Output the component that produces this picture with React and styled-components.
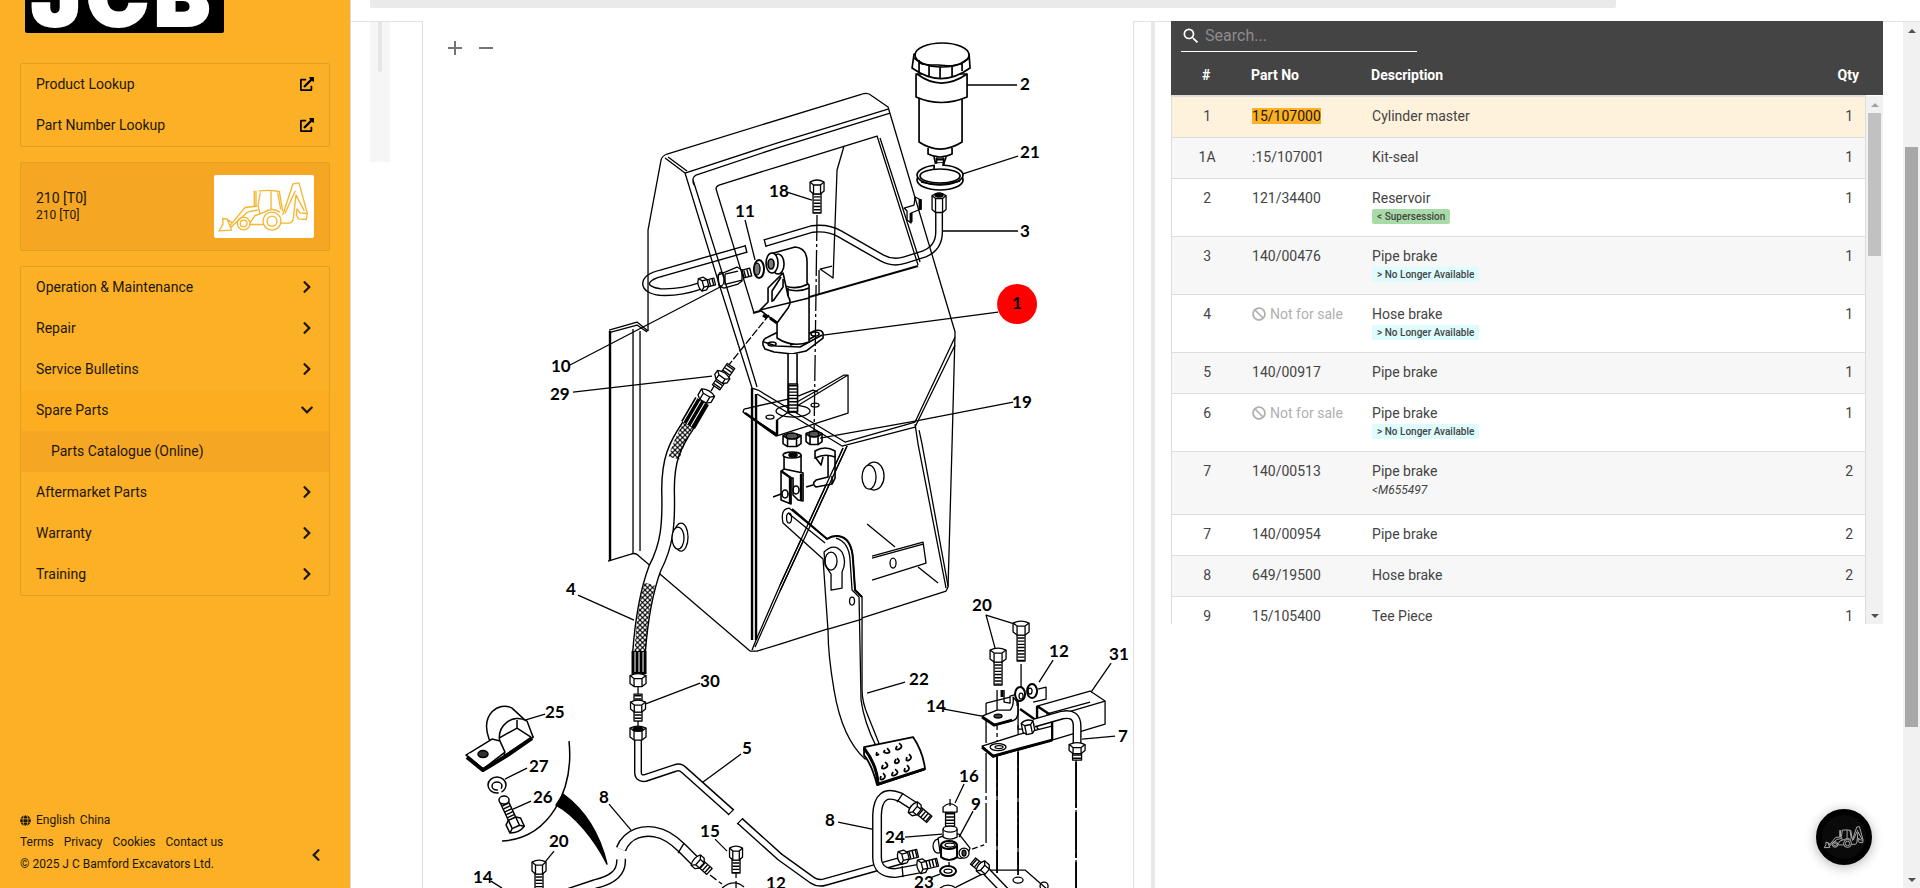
import styled, { createGlobalStyle } from "styled-components";
import {
  FaBan,
  FaChevronDown,
  FaChevronLeft,
  FaChevronRight,
  FaExternalLinkAlt,
  FaGlobe,
} from "react-icons/fa";
import { MdAdd, MdRemove, MdSearch } from "react-icons/md";

const GlobalStyle = createGlobalStyle`
  * {
    box-sizing: border-box;
  }

  body {
    margin: 0;
    font-family: Roboto, "Liberation Sans", sans-serif;
    font-size: 14px;
    color: #444;
    background-color: #fff;
    overflow: hidden;
  }

  button, input {
    font-family: inherit;
    font-size: inherit;
    color: inherit;
  }
`;

const Layout = styled.div`
  display: flex;
  height: 100vh;
  overflow: hidden;
`;

/* ---------- sidebar ---------- */

const Sidebar = styled.aside`
  width: 351px;
  flex-shrink: 0;
  display: flex;
  flex-direction: column;
  padding: 0 20px 13px;
  color: #1d1705;
  background-color: #fcb026;
  border-right: 1px solid #ddd;
`;

const Logo = styled.svg`
  display: block;
  width: 200px;
  height: 33px;
  margin: 0 0 30px 5px;
`;

const Card = styled.nav`
  margin-bottom: 15px;
  border: 1px solid #e29e22;
  border-radius: 2px;
`;

const MenuItem = styled.a`
  display: flex;
  align-items: center;
  justify-content: space-between;
  height: 41px;
  padding: 0 15px 2px ${({ $nested }) => ($nested ? "30px" : "15px")};
  color: inherit;
  text-decoration: none;
  background-color: ${({ $tone }) => $tone || "transparent"};
`;

const IconSlot = styled.span`
  width: 14px;
  display: flex;
  justify-content: center;
  font-size: 14px;
`;

const Machine = styled.section`
  display: flex;
  align-items: center;
  justify-content: space-between;
  margin-bottom: 15px;
  padding: 12px 15px;
  border: 1px solid #e29e22;
  border-radius: 2px;
  background-color: #f5a623;

  p {
    margin: 0;
    line-height: 17px;
  }

  small {
    display: block;
    font-size: 12px;
    line-height: 16px;
  }
`;

const MachineImage = styled.div`
  width: 100px;
  height: 63px;
  border-radius: 2px;
  background-color: #fff;
  color: #f6b52f;

  svg {
    display: block;
    width: 100%;
    height: 100%;
  }
`;

const Footer = styled.footer`
  display: flex;
  align-items: center;
  justify-content: space-between;
  margin-top: auto;
  font-size: 12px;
  line-height: 22px;
`;

const FooterRow = styled.div`
  display: flex;
  align-items: center;
  gap: ${({ $gap }) => $gap || 10}px;

  a {
    color: inherit;
    text-decoration: none;
  }
`;

const CollapseButton = styled.button`
  align-self: flex-end;
  display: flex;
  padding: 13px 7px;
  border: 0;
  background: none;
  font-size: 14px;
  cursor: pointer;
`;

/* ---------- main area ---------- */

const Main = styled.main`
  flex: 1;
  min-width: 0;
  display: flex;
  flex-direction: column;
`;

const TopBar = styled.div`
  height: 21px;
  flex-shrink: 0;
  padding: 0 304px 0 19px;
`;

const TopBarFill = styled.div`
  height: 8px;
  border-radius: 0 0 2px 2px;
  background-color: #eaeaea;
`;

const Content = styled.div`
  flex: 1;
  min-height: 0;
  display: flex;
  padding-left: 19px;
  border-top: 1px solid #e2e2e2;
`;

const ThumbStrip = styled.div`
  width: 20px;
  height: 140px;
  flex-shrink: 0;
  margin-right: 32px;
  display: flex;
  justify-content: center;
  background-color: #f6f6f6;

  span {
    width: 4px;
    height: 50px;
    border-radius: 0 0 2px 2px;
    background-color: #e6e6e6;
  }
`;

const Viewer = styled.section`
  position: relative;
  flex: 1 1 50%;
  min-width: 0;
  margin-top: -1px;
  border: solid #e0e0e0;
  border-width: 0 1px;
  background-color: #fff;
`;

const ZoomTools = styled.div`
  position: absolute;
  top: 15px;
  left: 20px;
  display: flex;
  gap: 7px;

  button {
    display: flex;
    padding: 0;
    border: 0;
    background: none;
    color: #757575;
    font-size: 24px;
    cursor: pointer;
  }
`;

const Sheet = styled.svg`
  display: block;
  width: 100%;
  height: 100%;
  fill: none;
  stroke: #000;
  stroke-width: 1.3;
  stroke-linejoin: round;

  text {
    fill: #000;
    stroke: none;
    font-family: Lato, "Open Sans", sans-serif;
    font-size: 17px;
    font-weight: 700;
  }
`;

const Splitter = styled.div`
  width: 4px;
  flex-shrink: 0;
  margin: 0 16px 0 17px;
  background-color: #e8e8e8;
`;

const PartsPanel = styled.section`
  position: relative;
  flex: 1 1 50%;
  min-width: 0;
  height: 603px;
  margin: -1px 20px 0 0;
  display: flex;
  flex-direction: column;
  overflow: hidden;
`;

const SearchBar = styled.div`
  flex-shrink: 0;
  padding: 0 10px;
  background-color: #444;
`;

const SearchField = styled.label`
  width: 236px;
  height: 31px;
  display: flex;
  align-items: center;
  gap: 4px;
  padding-bottom: 1px;
  border-bottom: 1px solid #fff;
  color: #fff;

  svg {
    flex-shrink: 0;
    font-size: 20px;
  }

  input {
    width: 100%;
    min-width: 0;
    height: 28px;
    padding: 0;
    border: 0;
    outline: 0;
    background: none;
    font-size: 16px;
  }

  input::placeholder {
    color: #8d8d8d;
    opacity: 1;
  }
`;

const Table = styled.table`
  display: block;

  thead,
  tbody {
    display: block;
  }

  thead {
    background-color: #444;
    color: #fff;
  }

  tbody {
    margin-right: 17px;
    border: 1px solid #ddd;
    border-top-width: 2px;
  }

  tr {
    display: grid;
    grid-template-columns: 80px 120px 1fr 60px;
  }

  th {
    padding: 13px 0 10px;
    line-height: 20px;
    font-weight: 700;
    text-align: left;
  }

  td {
    padding: 9px 0 11px;
    line-height: 20px;
  }

  th:first-child,
  td:first-child {
    padding-left: 20px;
    padding-right: 30px;
    text-align: center;
  }

  th:last-child {
    padding-right: 24px;
    text-align: right;
  }

  td:last-child {
    padding-right: 12px;
    text-align: right;
  }
`;

const PartRow = styled.tr`
  border-bottom: 1px solid #ddd;
  background-color: ${({ $selected, $odd }) =>
    $selected ? "#fff2dc" : $odd ? "#f7f7f7" : "#fff"};

  mark {
    color: #1d1705;
    background-color: #fcb026;
  }
`;

const NotForSale = styled.span`
  display: flex;
  align-items: center;
  gap: 4px;
  color: #b0b0b0;
`;

const TagLine = styled.div`
  height: 17px;
  display: flex;
  align-items: flex-start;
  padding-top: 1px;
`;

const Tag = styled.span`
  padding: 0 5px;
  border-radius: 2px;
  font-size: 10px;
  font-weight: 500;
  line-height: 15px;
  color: #444;
  background-color: ${({ $kind }) =>
    $kind === "supersession" ? "#a9dba9" : "#defbfd"};
`;

const Note = styled.div`
  height: 22px;
  padding-top: 1px;
  font-size: 12px;
  font-style: italic;
  line-height: 17px;
`;

const Track = styled.div`
  width: 17px;
  flex-shrink: 0;
  display: flex;
  flex-direction: column;
  align-items: center;
  background-color: #f1f1f1;
`;

const TableTrack = styled(Track)`
  position: absolute;
  top: 75px;
  right: 0;
  bottom: 0;
`;

const Arrow = styled.span`
  width: 17px;
  height: 17px;
  display: flex;
  align-items: center;
  justify-content: center;
  margin-top: ${({ $down }) => ($down ? "auto" : 0)};

  &::after {
    content: "";
    border: solid transparent;
    border-width: ${({ $down }) => ($down ? "4px 4px 0" : "0 4px 4px")};
    border-top-color: ${({ $down }) => ($down ? "#505050" : "transparent")};
    border-bottom-color: ${({ $muted }) => ($muted ? "#a3a3a3" : "#505050")};
  }
`;

const Thumb = styled.span`
  width: 13px;
  height: ${({ $size }) => $size};
  margin-top: ${({ $offset }) => $offset || 0};
  background-color: ${({ $dark }) => ($dark ? "#a8a8a8" : "#c1c1c1")};
`;

const ChatButton = styled.button`
  position: fixed;
  right: 48px;
  bottom: 23px;
  width: 56px;
  height: 56px;
  display: flex;
  align-items: center;
  justify-content: center;
  padding: 0;
  border: 6px solid #000;
  border-radius: 50%;
  background-color: #0a0a0a;
  color: #bdbdbd;
  box-shadow: 0 2px 12px rgba(0, 0, 0, 0.3);
  cursor: pointer;

  svg {
    width: 44px;
    height: 28px;
    flex-shrink: 0;
  }
`;

/* ---------- data ---------- */

const MENU = [
  { label: "Operation & Maintenance" },
  { label: "Repair" },
  { label: "Service Bulletins" },
  { label: "Spare Parts", open: true, tone: "#fcae20" },
  { label: "Parts Catalogue (Online)", nested: true, tone: "#f5a623" },
  { label: "Aftermarket Parts" },
  { label: "Warranty" },
  { label: "Training" },
];

const PARTS = [
  { ref: "1", no: "15/107000", name: "Cylinder master", qty: 1, selected: true },
  { ref: "1A", no: ":15/107001", name: "Kit-seal", qty: 1 },
  { ref: "2", no: "121/34400", name: "Reservoir", qty: 1, tag: "supersession" },
  { ref: "3", no: "140/00476", name: "Pipe brake", qty: 1, tag: "unavailable" },
  { ref: "4", name: "Hose brake", qty: 1, tag: "unavailable" },
  { ref: "5", no: "140/00917", name: "Pipe brake", qty: 1 },
  { ref: "6", name: "Pipe brake", qty: 1, tag: "unavailable" },
  { ref: "7", no: "140/00513", name: "Pipe brake", qty: 2, note: "<M655497" },
  { ref: "7", no: "140/00954", name: "Pipe brake", qty: 2 },
  { ref: "8", no: "649/19500", name: "Hose brake", qty: 2 },
  { ref: "9", no: "15/105400", name: "Tee Piece", qty: 1 },
];

const TAGS = {
  supersession: "< Supersession",
  unavailable: "> No Longer Available",
};

// [text, x, baseline]
const CALLOUTS = [
  ["2", 1020, 90], ["21", 1020, 158], ["3", 1020, 237], ["19", 1012, 408],
  ["18", 769, 197], ["11", 735, 217], ["10", 551, 372], ["29", 550, 400],
  ["4", 566, 595], ["30", 700, 687], ["25", 545, 718], ["27", 529, 772],
  ["26", 533, 803], ["8", 599, 803], ["5", 742, 754], ["20", 549, 847],
  ["15", 700, 837], ["14", 473, 883], ["12", 766, 889], ["20", 972, 611],
  ["12", 1049, 657], ["31", 1109, 660], ["14", 926, 712], ["7", 1118, 742],
  ["22", 909, 685], ["16", 959, 782], ["9", 971, 810], ["8", 825, 826],
  ["24", 885, 843], ["23", 914, 888],
];

const LEADERS =
  "M967 85H1017M962 174L1018 156M942 231H1018M823 335L998 312M820 438L915 421L1013 402" +
  "M787 192L812 200M745 220L755 260M570 365L722 286M573 392L712 376M578 595L634 620" +
  "M645 704L700 683M525 720L545 714M505 779L527 768M513 809L531 801M609 804L631 830" +
  "M741 754L703 782M554 851L545 862M715 839L727 851M491 881L502 888M995 648L986 615L1015 624" +
  "M1053 660L1039 682M1111 663L1091 692M944 709L982 716M1115 736L1082 739M867 693L905 682" +
  "M964 784L955 803M973 811L959 837M838 822L872 829M905 837L942 834M932 877L940 874";

/* ---------- drawings ---------- */

const Backhoe = ({ weight = 4 }) => (
  <svg viewBox="642 525 300 188" fill="none" stroke="currentColor" strokeWidth={weight} strokeLinejoin="round">
    <path d="M668 655L681 656L695 690L657 692L669 672ZM683 658L697 668L735 622L771 618M692 682L742 636L774 629M697 668L690 676" />
    <path d="M763 572V618M768 572V618M776 573Q806 568 838 574L848 633M781 577L774 616L780 641M833 577L842 628M813 572V628M780 641L793 636Q816 620 840 636" />
    <circle cx="816" cy="663" r="27" />
    <circle cx="816" cy="663" r="15" />
    <circle cx="731" cy="670" r="19" />
    <circle cx="731" cy="670" r="10" />
    <path d="M750 673H790M750 668L765 646L780 641M843 669H868Q878 668 880 654L888 584L913 632M848 645L879 551L897 548L922 640L919 658L896 656L889 645L891 626L900 638L921 640M855 640L886 572" />
  </svg>
);

const Tube = ({ d, w = 8 }) => (
  <>
    <path d={d} strokeWidth={w} />
    <path d={d} strokeWidth={w - 2.8} stroke="#fff" />
  </>
);

const Thread = ({ x, y, len, w = 8, angle = 0 }) => (
  <g transform={`translate(${x} ${y}) rotate(${angle})`}>
    <path d={`M${-w / 2} 0H${w / 2}V${len}H${-w / 2}Z`} fill="#fff" />
    <path d={`M0 1V${len}`} strokeWidth={w - 1} strokeDasharray="1.4 1.8" />
  </g>
);

const Hex = ({ x, y, w = 15, h = 10, angle = 0 }) => {
  const a = w / 2;
  const b = h / 2;
  return (
    <g transform={`translate(${x} ${y}) rotate(${angle})`}>
      <path
        fill="#fff"
        d={`M${-a} ${-b}Q0 ${-b - 4} ${a} ${-b}V${b - 1}L${a / 2} ${b + 2}H${-a / 2}L${-a} ${b - 1}Z`}
      />
      <path d={`M${-a} ${-b}L${-a / 2} ${-b + 3}H${a / 2}L${a} ${-b}M${-a / 2} ${-b + 3}V${b + 2}M${a / 2} ${-b + 3}V${b + 2}`} />
    </g>
  );
};

const Bolt = ({ x, y, len, w = 15, angle = 0 }) => (
  <g transform={`translate(${x} ${y}) rotate(${angle})`}>
    <Thread x={0} y={5} len={len} />
    <Hex x={0} y={0} w={w} />
  </g>
);

const Housing = () => (
  <g>
    <path d="M648 331V230L661 160Q662 156 667 154L862 94Q868 92 872 96L888 107L955 332L952 444L948 587L946 591L780 644L757 651H750L640 557Q636 552 631 554L608 561" />
    <path d="M665 158L685 173L780 142L888 109M668 157L687 171M694 185Q691 178 696 175L780 147L890 113M685 173L720 287L752 388M693 180L726 285L757 387" />
    <path d="M754 313L716 189Q716 186 719 185L780 166L877 136L918 265M880 138L920 262M844 146L837 170L833 278L820 269L832 266M819 270V294" />
    <path strokeWidth="2" d="M753 313L918 266" />
    <path d="M609 330L637 322L648 331M611 332L637 325L647 332M633 329V553M640 331V551" />
    <path strokeWidth="2.4" d="M610 331V561M752 388V640M756 394V640" />
    <path d="M758 390L845 442L915 422L955 337M757 394L842 446L915 427L955 345M752 388L758 390" />
    <path d="M915 424L918 444L946 588M919 430L922 444L948 586M847 446L780 591L755 647M843 448L780 585L756 640L752 650" />
    <path d="M872 556L923 542L926 563L872 580M872 558L923 544M867 524L895 547M918 567L938 583" />
    <ellipse cx="893" cy="563" rx="3" ry="5" />
    <ellipse cx="874" cy="476" rx="10" ry="14" />
    <ellipse cx="869" cy="477" rx="7" ry="12" fill="#fff" />
    <path d="M904 208L914 205L915 197L921 200V209L911 213V223L907 220V211Z" />
    <path strokeWidth="3" d="M920 199V210M911 213V222" />
  </g>
);

const Reservoir = () => (
  <g fill="#fff" strokeWidth="1.7">
    <path d="M919 96V142Q940 156 962 142V96ZM928 148V154Q940 160 952 154V148" />
    <path d="M916 74V97Q941 108 967 97V74Z" />
    <path d="M914 54L912 68Q941 89 970 68L969 54Z" />
    <ellipse cx="942" cy="55" rx="27" ry="12" />
    <path fill="none" d="M917 74Q941 92 967 74M919 60V72M929 65V76M940 67V78M952 65V76M962 62V71M914 58L922 64L930 65H938L951 66L960 64L969 58" />
    <path d="M934 157L936 166H943L946 157" />
    <Thread x={940} y={158} len={9} w={7} />
    <ellipse cx="940" cy="180" rx="23" ry="10" />
    <ellipse cx="940" cy="175" rx="23" ry="10" />
    <ellipse cx="940" cy="176" rx="20" ry="7" />
    <path stroke="#fff" strokeWidth="4" d="M935 166L942 165" />
    <path fill="none" d="M934 165V169M921 182Q940 187 960 181" />
  </g>
);

const MasterCylinder = () => (
  <g strokeWidth="1.6">
    <path fill="#fff" d="M763 345Q762 339 768 337L776 333L808 334Q820 327 823 333V338L806 351L792 354L774 352L765 349Z" />
    <path d="M764 342L776 346L800 347L822 335M790 345L806 341L815 336" />
    <ellipse cx="772" cy="344" rx="4" ry="2" />
    <ellipse cx="815" cy="334" rx="4" ry="2" />
    <path fill="#fff" d="M777 322V338Q792 348 809 342V285L807 283V262Q807 248 795 247L770 254L778 273L783 274L785 286L777 322Z" />
    <ellipse cx="778" cy="264" rx="6" ry="10" fill="#fff" />
    <ellipse cx="772" cy="263" rx="6" ry="10" fill="#fff" />
    <ellipse cx="771" cy="264" rx="3" ry="5" fill="#777" />
    <path d="M785 286Q797 290 808 284M786 289Q798 293 809 288" />
    <path fill="#fff" d="M783 273L768 288V302L760 310L777 323L788 308Q792 302 788 296Z" />
    <path d="M781 277L772 291V302M783 279V287L773 301M788 296V288M760 310L809 298" />
    <path strokeWidth="3" d="M763 315L767 318M770 318L777 323" />
    <path fill="#fff" d="M788 354V412H797V354" />
    <Thread x={793} y={384} len={28} w={9} />
  </g>
);

const Plate = () => (
  <g>
    <path d="M744 409L788 399M798 396L813 390L818 392M744 409L743 412L776 436L848 413V375L797 406L777 420V436M848 375L844 375L797 402M744 413L777 434" />
    <path strokeWidth="2.4" d="M745 413L776 435M777 420V436" />
    <ellipse cx="793" cy="411" rx="17" ry="6" />
    <ellipse cx="770" cy="417" rx="4" ry="2" />
    <ellipse cx="815" cy="405" rx="4" ry="2" />
  </g>
);

const Clevis = () => (
  <g strokeWidth="1.6">
    <Hex x={792} y={440} w={18} h={9} />
    <Hex x={814} y={438} w={16} h={9} />
    <ellipse cx="792" cy="436" rx="6" ry="3" fill="#555" />
    <ellipse cx="814" cy="434" rx="5" ry="3" fill="#555" />
    <path fill="#fff" d="M784 455V474H801V455" />
    <ellipse cx="792" cy="455" rx="9" ry="3" fill="#fff" />
    <ellipse cx="793" cy="455" rx="4" ry="2" fill="#000" />
    <path fill="#fff" d="M781 471L784 469L803 473V501L798 500L793 495V478H791V504L781 500Z" />
    <path strokeWidth="2.4" d="M790 478V504M801 474V501M781 471L791 478" />
    <ellipse cx="785" cy="494" rx="3" ry="4" />
    <ellipse cx="796" cy="490" rx="3" ry="4" />
    <path d="M773 497L781 494M806 487L813 485" />
    <path fill="#fff" d="M828 456V477L816 480Q811 484 816 487L832 484L835 478V456" />
    <path d="M815 457L821 465L823 457M832 476V484" />
    <path fill="#fff" d="M815 451Q825 445 835 451V457Q825 453 815 458Z" />
  </g>
);

const Pedal = () => (
  <g>
    <path
      fill="#fff"
      d="M783 523Q780 509 789 508L827 539Q834 534 842 537Q852 541 853 560L855 590L862 597V690Q862 702 868 716L880 746L865 759Q842 738 834 690Q828 655 828 631L823 559Z"
    />
    <path strokeWidth="2" d="M792 509L827 539Q834 534 842 537Q852 541 853 560L855 590L862 597" />
    <path d="M788 513L825 543M836 538Q849 542 850 560L852 590L859 597L861 700Q864 722 876 746" />
    <ellipse cx="789" cy="518" rx="2.5" ry="5" />
    <path fill="#fff" d="M824 552Q834 542 842 552Q847 562 842 572V588L831 590V574L825 565Z" />
    <ellipse cx="831" cy="561" rx="6" ry="9" />
    <ellipse cx="852" cy="601" rx="2.5" ry="4" />
    <path strokeWidth="1.8" fill="#fff" d="M864 747L913 737Q923 752 925 769L877 785Q872 765 864 755Z" />
    <path strokeWidth="3" d="M864 748Q877 765 878 784L924 769" />
    <path strokeWidth="1.8" d="M879 754q-4 3-2 -2m10 -4q5 5 0 5t-2 -3m14 -7q5 4 0 6t-2 -3m-12 16q5 4 0 6t-2 -3m14 -7q4 4 0 5t-1 -4m13 -5q4 4 0 6t-2 -3m-24 16q4 4 0 6t-2 -3m14 -7q5 4 0 6t-2 -3m14 -7q4 4 0 6t-2 -3" />
  </g>
);

const HoseFour = () => (
  <g>
    <Tube w={14} d="M689 424C674 446 668 460 668 490C669 525 667 545 655 568Q643 600 639 652" />
    <path d="M689 424C682 436 677 446 674 458M650 584Q642 610 640 652" stroke="url(#braid)" strokeWidth="11" />
    <path d="M702 401L688 425" strokeWidth="16" />
    <path d="M705 402L691 426M701 400L687 424M697 398L683 422" stroke="#fff" strokeWidth="1" />
    <Hex x={706} y={396} w={15} h={8} angle={30} />
    <path d="M639 651V674" strokeWidth="15" />
    <path d="M635 652V672M639 652V672M643 652V672" stroke="#fff" strokeWidth="1" />
    <Hex x={638} y={680} w={16} h={9} />
    <path d="M638 686V694M638 721V727M711 391L714 386M727 367L769 315" strokeDasharray="8 2" />
    <Thread x={638} y={694} len={27} w={8} />
    <Hex x={638} y={706} w={15} h={8} />
    <Thread x={731} y={366} len={26} w={9} angle={35} />
    <Hex x={722} y={377} w={15} h={6} angle={35} />
    <ellipse cx="681" cy="537" rx="7" ry="14" fill="#fff" />
    <ellipse cx="678" cy="538" rx="6" ry="11" fill="#fff" />
  </g>
);

const Clamp = () => (
  <g strokeWidth="1.5">
    <path fill="#fff" d="M489 739C480 714 499 701 512 708L525 720L533 737L505 755Z" />
    <path fill="#fff" d="M500 743C496 725 513 713 527 721L533 737L505 755Z" />
    <path d="M499 738L517 728V720M517 728L531 737" />
    <path fill="#fff" d="M466 755L492 739L500 741L505 752L483 769Z" />
    <path strokeWidth="4" d="M467 757L483 770L506 756L532 738" />
    <path stroke="#fff" strokeWidth="2" d="M469 754L483 766" />
    <ellipse cx="483" cy="754" rx="5" ry="3.5" fill="#333" />
    <ellipse cx="497" cy="785" rx="9" ry="8" />
    <ellipse cx="497" cy="786" rx="5" ry="4" />
    <path stroke="#fff" strokeWidth="3" d="M499 788L501 796" />
    <Bolt x={515} y={825} len={22} angle={155} w={16} />
    <ellipse cx="504" cy="800" rx="5" ry="4" fill="#fff" />
    <path d="M569 741C574 790 550 838 502 841" />
    <path fill="#000" d="M563 794C585 810 600 835 607 864C595 840 575 815 556 805Z" />
  </g>
);

const LowerPipes = () => (
  <g>
    <Tube w={8} d="M638 738V772Q638 779 645 778L675 768Q680 766 684 770L731 812" />
    <Tube w={8} d="M740 821L780 857L812 880Q818 884 825 882L903 860" />
    <Hex x={638} y={733} w={16} h={10} />
    <ellipse cx="638" cy="729" rx="5" ry="2" fill="#000" />
    <path d="M728 815L734 809M737 824L743 818" />
    <Tube w={11} d="M621 849C628 832 645 830 655 832Q668 834 682 848L696 862" />
    <path d="M678 853L684 843" />
    <Thread x={699} y={862} len={14} w={8} angle={-48} />
    <Hex x={698} y={862} w={14} h={6} angle={-48} />
    <Tube w={10} d="M621 859C622 873 612 880 595 884L565 894" />
    <path d="M710 875L722 884M736 870V888" strokeDasharray="8 3" />
    <path d="M722 888Q734 878 744 887" />
    <Bolt x={539} y={867} len={24} w={14} />
    <Bolt x={736} y={853} len={15} w={13} />
    <Tube w={10} d="M914 806L900 797Q878 788 877 815V857Q877 873 895 873L922 868" />
    <path d="M897 802L903 793M903 877L902 866" />
    <Thread x={917} y={809} len={16} w={8} angle={-50} />
    <Hex x={915} y={809} w={14} h={6} angle={-50} />
    <Thread x={902} y={857} len={16} w={8} angle={-104} />
    <Hex x={903} y={857} w={13} h={7} angle={-104} />
    <Thread x={922} y={866} len={16} w={8} angle={-104} />
    <Hex x={922} y={866} w={14} h={6} angle={-104} />
    <Thread x={950} y={812} len={14} w={9} />
    <path fill="#fff" d="M943 812V807Q950 800 957 807V812Z" />
    <path d="M950 799V806M949 862V870" />
    <ellipse cx="938" cy="846" rx="5" ry="7" fill="#fff" />
    <path fill="#fff" d="M938 838L947 834H959L970 848Q966 860 959 858L940 852Z" />
    <path fill="#fff" strokeWidth="2" d="M941 845V857Q949 863 957 857V845" />
    <ellipse cx="949" cy="845" rx="8" ry="4" fill="#fff" strokeWidth="2" />
    <ellipse cx="950" cy="845" rx="5" ry="2" />
    <ellipse cx="964" cy="853" rx="5" ry="5" fill="#fff" />
    <ellipse cx="964" cy="853" rx="2" ry="3" fill="#444" />
    <path fill="#fff" d="M943 829V837Q950 841 957 837V829" />
    <ellipse cx="950" cy="829" rx="7" ry="3" fill="#fff" />
    <ellipse cx="948" cy="871" rx="8" ry="5" fill="#fff" strokeWidth="2" />
    <ellipse cx="948" cy="871" rx="4" ry="2" />
    <path d="M956 887L990 870H1025L1048 890M940 888Q948 882 956 888" />
    <ellipse cx="1018" cy="880" rx="5" ry="3" />
    <ellipse cx="1044" cy="886" rx="4" ry="4" />
    <Tube w={9} d="M984 869L1006 892" />
    <Thread x={973} y={861} len={12} w={8} angle={-50} />
    <Hex x={983} y={868} w={13} h={7} angle={-50} />
  </g>
);

const BracketGroup = () => (
  <g>
    <path d="M986 703V844L972 849M997 690V873M1018 725V875M1076 760V888M1021 664V690" strokeDasharray="40 3 4 3" />
    <path d="M997 750V873M1018 752V875M1076 762V888" strokeWidth="1.8" strokeDasharray="46 4" />
    <Bolt x={998} y={655} len={25} w={16} />
    <Bolt x={1021} y={628} len={28} w={16} />
    <path fill="#fff" d="M1037 706L1090 691L1105 701V724L1052 740L1037 728Z" />
    <path d="M1054 716L1105 701M1046 714L1090 702" />
    <path strokeWidth="2.4" d="M1037 706L1052 716V740M1037 706V720M1020 709L1037 721" />
    <path d="M986 703L1010 697M1033 702L1046 699V687L1038 689" />
    <path fill="#fff" d="M982 746L1020 734L1052 726V740L993 757Z" />
    <path strokeWidth="3" d="M982 747L993 756L1052 740" />
    <path strokeWidth="2" d="M1052 716V740" />
    <ellipse cx="998" cy="747" rx="8" ry="3.5" />
    <ellipse cx="999" cy="747" rx="4" ry="1.5" />
    <path fill="#fff" d="M982 716L997 710L1010 710Q1014 706 1013 697L1018 703V712Q1018 720 1011 721L994 725Z" />
    <path strokeWidth="3" d="M982 717L994 725L1012 720M1002 690V697" />
    <path d="M1004 690V702L1010 703V696L1017 694V706" />
    <ellipse cx="998" cy="716" rx="4" ry="2" fill="#444" />
    <ellipse cx="1020" cy="694" rx="5" ry="7" fill="#fff" strokeWidth="2" />
    <ellipse cx="1021" cy="696" rx="2" ry="3" />
    <ellipse cx="1032" cy="691" rx="5" ry="7" fill="#fff" strokeWidth="2" />
    <ellipse cx="1030" cy="691" rx="2" ry="3" />
    <Tube w={9} d="M1034 723L1062 715Q1077 712 1077 726V746" />
    <Hex x={1028} y={727} w={12} h={10} angle={-12} />
    <Thread x={1077} y={750} len={10} w={9} />
    <Hex x={1077} y={748} w={16} h={7} />
    <path d="M1018 700V729H1023" />
  </g>
);

const UpperPipes = () => (
  <g>
    <Tube w={8} d="M939 210V232Q939 248 924 254L905 260Q893 264 882 258L840 234Q828 227 812 229L765 243" />
    <path d="M764 239L766 247" />
    <Hex x={939} y={203} w={14} h={15} />
    <ellipse cx="939" cy="195" rx="4" ry="2" fill="#000" />
    <Tube w={8} d="M746 249L662 273C640 278 642 290 660 292Q680 293 700 286" />
    <path d="M745 245L747 253" />
    <Thread x={705} y={284} len={10} w={7} angle={-105} />
    <Hex x={703} y={284} w={13} h={6} angle={-105} />
    <path fill="#fff" d="M718 275L737 267L742 270V281L738 284L724 288L719 286Z" />
    <path d="M725 274L738 271M726 284L742 280M725 274V285" />
    <ellipse cx="721" cy="279" rx="3" ry="7" />
    <Thread x={743} y={274} len={8} w={8} angle={-105} />
    <ellipse cx="759" cy="269" rx="5" ry="9" fill="#fff" strokeWidth="2" />
    <ellipse cx="757" cy="269" rx="3" ry="6" fill="#777" />
  </g>
);

const BrakeDiagram = () => (
  <Sheet viewBox="423 21 710 867" preserveAspectRatio="xMinYMin slice" role="img" aria-label="Brake system">
    <defs>
      <pattern id="braid" width="5" height="5" patternUnits="userSpaceOnUse">
        <path d="M0 0L5 5M5 0L0 5" stroke="#000" strokeWidth="1.1" />
      </pattern>
    </defs>
    <UpperPipes />
    <Housing />
    <Reservoir />
    <Plate />
    <MasterCylinder />
    <path d="M817 215L814 436" strokeDasharray="26 3 3 3" />
    <Bolt x={817} y={187} len={21} w={14} />
    <Clevis />
    <Pedal />
    <path d="M847 446L780 591M843 448L780 585M828 629L862 619" />
    <HoseFour />
    <Clamp />
    <LowerPipes />
    <BracketGroup />
    <path d={LEADERS} />
    {CALLOUTS.map(([label, x, y]) => (
      <text key={`${x}-${y}`} x={x} y={y}>
        {label}
      </text>
    ))}
    <circle cx="1017" cy="304" r="20" fill="#f00" stroke="none" />
    <text x="1012" y="309">1</text>
  </Sheet>
);

/* ---------- page ---------- */

const SideMenu = () => (
  <Sidebar>
    <Logo viewBox="0 0 200 33" role="img" aria-label="JCB">
      <rect y="-20" width="199" height="53" rx="2" fill="#000" />
      <g fill="#fff" stroke="#fff" strokeWidth="2" fontFamily="Inter, sans-serif" fontWeight="900" fontSize="84">
        <text x="6" y="26">J</text>
        <text x="61" y="26">C</text>
        <text x="129" y="26">B</text>
      </g>
    </Logo>
    <Card aria-label="Lookup">
      {["Product Lookup", "Part Number Lookup"].map((label) => (
        <MenuItem href="#" key={label}>
          {label}
          <IconSlot>
            <FaExternalLinkAlt color="#000" />
          </IconSlot>
        </MenuItem>
      ))}
    </Card>
    <Machine>
      <div>
        <p>210 [T0]</p>
        <small>210 [T0]</small>
      </div>
      <MachineImage>
        <Backhoe />
      </MachineImage>
    </Machine>
    <Card aria-label="Documents">
      {MENU.map(({ label, nested, open, tone }) => (
        <MenuItem href="#" key={label} $nested={nested} $tone={tone}>
          {label}
          {!nested && <IconSlot>{open ? <FaChevronDown /> : <FaChevronRight />}</IconSlot>}
        </MenuItem>
      ))}
    </Card>
    <Footer>
      <div>
        <FooterRow $gap={5}>
          <FaGlobe size={11} /> English <span>China</span>
        </FooterRow>
        <FooterRow>
          <a href="#">Terms</a>
          <a href="#">Privacy</a>
          <a href="#">Cookies</a>
          <a href="#">Contact us</a>
        </FooterRow>
        <FooterRow>© 2025 J C Bamford Excavators Ltd.</FooterRow>
      </div>
      <CollapseButton aria-label="Collapse menu">
        <FaChevronLeft />
      </CollapseButton>
    </Footer>
  </Sidebar>
);

const PartsTable = () => (
  <PartsPanel>
    <SearchBar>
      <SearchField>
        <MdSearch />
        <input type="text" placeholder="Search..." aria-label="Search parts" />
      </SearchField>
    </SearchBar>
    <Table>
      <thead>
        <tr>
          <th>#</th>
          <th>Part No</th>
          <th>Description</th>
          <th>Qty</th>
        </tr>
      </thead>
      <tbody>
        {PARTS.map((part, i) => (
          <PartRow key={i} $selected={part.selected} $odd={i % 2 === 1}>
            <td>{part.ref}</td>
            <td>
              {part.selected ? <mark>{part.no}</mark> : part.no}
              {!part.no && (
                <NotForSale>
                  <FaBan /> Not for sale
                </NotForSale>
              )}
            </td>
            <td>
              {part.name}
              {part.tag && (
                <TagLine>
                  <Tag $kind={part.tag}>{TAGS[part.tag]}</Tag>
                </TagLine>
              )}
              {part.note && <Note>{part.note}</Note>}
            </td>
            <td>{part.qty}</td>
          </PartRow>
        ))}
      </tbody>
    </Table>
    <TableTrack>
      <Arrow $muted />
      <Thumb $size="143px" />
      <Arrow $down />
    </TableTrack>
  </PartsPanel>
);

const App = () => {
  return (
    <Layout>
      <GlobalStyle />
      <SideMenu />
      <Main>
        <TopBar>
          <TopBarFill />
        </TopBar>
        <Content>
          <ThumbStrip>
            <span />
          </ThumbStrip>
          <Viewer>
            <BrakeDiagram />
            <ZoomTools>
              <button aria-label="Zoom in">
                <MdAdd />
              </button>
              <button aria-label="Zoom out">
                <MdRemove />
              </button>
            </ZoomTools>
          </Viewer>
          <Splitter />
          <PartsTable />
          <Track>
            <Arrow />
            <Thumb $dark $size="67%" $offset="108px" />
            <Arrow $down />
          </Track>
        </Content>
      </Main>
      <ChatButton aria-label="Open assistant">
        <Backhoe weight={6} />
      </ChatButton>
    </Layout>
  );
};

export default App;
